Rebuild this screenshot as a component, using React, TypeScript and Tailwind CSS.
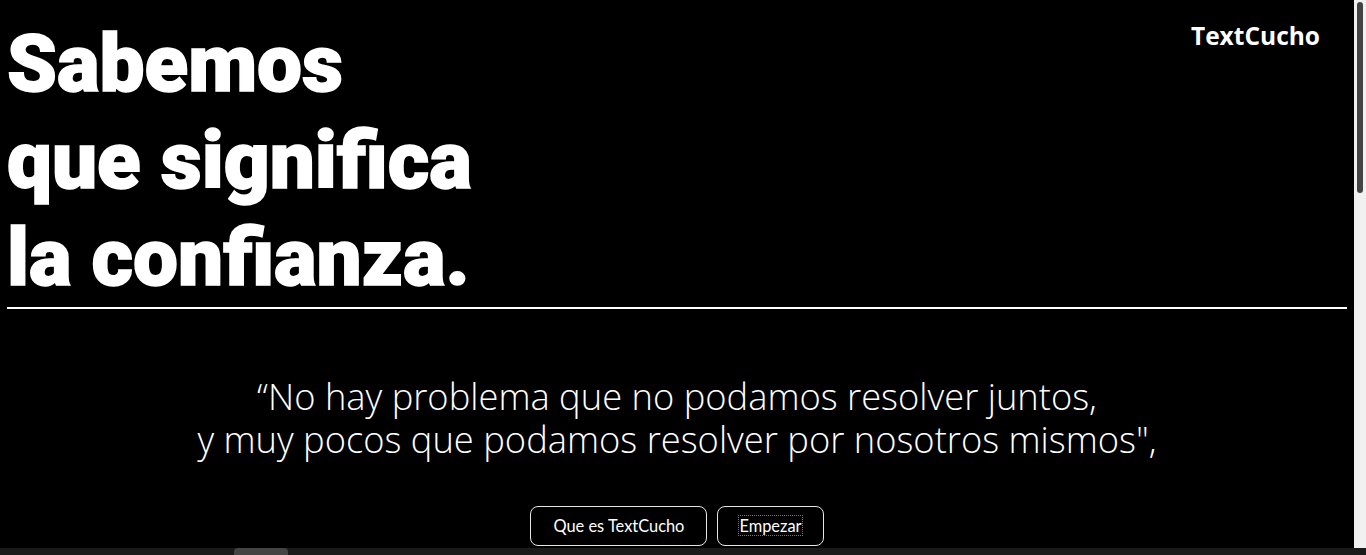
export default function App() {
  return (
    <div className="flex h-screen flex-col overflow-hidden bg-black">
      <div className="flex min-h-0 flex-1">
        <main className="min-w-0 flex-1 overflow-hidden px-[7px] text-white">
          <header className="flex items-start justify-between">
            <h1 className="pt-[16px] font-['Roboto'] text-[80px] font-black leading-[97px] [-webkit-text-stroke:1.5px_white]">
              Sabemos
              <br />
              que significa
              <br />
              la confianza.
            </h1>
            <a href="#" className="mr-[27px] mt-[20px] font-['Open_Sans'] text-[24.5px] font-bold leading-[32px]">
              TextCucho
            </a>
          </header>
          <hr className="h-[2px] border-0 bg-white" />

          <section className="pt-[66px] text-center">
            <p className="font-['Open_Sans'] text-[36.3px] font-light leading-[43px]">
              “No hay problema que no podamos resolver juntos,
              <br />
              y muy pocos que podamos resolver por nosotros mismos",
            </p>
            <div className="mt-[45px] flex justify-center gap-[10px] font-['Lato'] text-[16.4px] leading-[20px]">
              <button className="rounded-lg border border-[#e5e5e5] bg-black px-[22px] py-[9px]">
                Que es TextCucho
              </button>
              <button className="rounded-lg border border-[#e5e5e5] bg-black px-[21px] py-[9px]">
                <span className="outline-1 outline-dotted outline-[#777]">Empezar</span>
              </button>
            </div>
          </section>
        </main>
        <div className="w-3 shrink-0 bg-[#f1f1f1] px-[3px] pt-[2px]">
          <div className="h-[191px] rounded-full bg-[#444]" />
        </div>
      </div>
      <div className="flex h-[7px] shrink-0 bg-[#1a1a1a]">
        <div className="ml-[234px] h-full w-[54px] rounded-t-[4px] bg-[#444]" />
      </div>
    </div>
  );
}
